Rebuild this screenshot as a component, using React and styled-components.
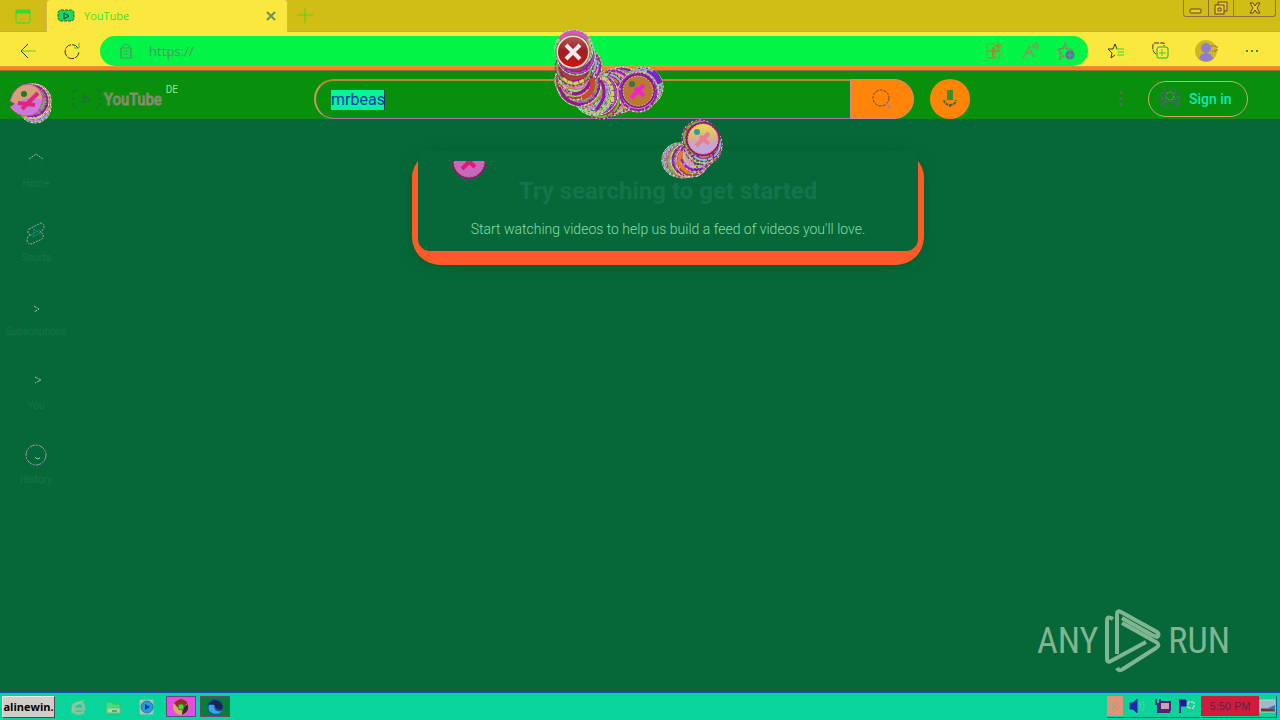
import React from "react";
import styled, { createGlobalStyle } from "styled-components";

const Global = createGlobalStyle`
  * { box-sizing: border-box; }
  body { margin: 0; background: #066839; font-family: Roboto, "Liberation Sans", sans-serif; }
  button, input { font: inherit; border: 0; padding: 0; margin: 0; background: none; color: inherit; }
  a { color: inherit; text-decoration: none; }
`;

const Page = styled.div`
  position: relative;
  min-height: 100vh;
  display: flex;
  flex-direction: column;
  overflow: hidden;
`;

const Glyph = styled.svg`
  display: block;
  flex: none;
  width: ${(p) => p.$w || 16}px;
  height: ${(p) => p.$h || p.$w || 16}px;
  fill: none;
  stroke: ${(p) => p.$c || "#3a3050"};
  overflow: visible;
`;

const TabStrip = styled.div`
  display: flex;
  height: 32px;
  background: #d0be17;
  border-bottom: 1px solid #c8b024;
`;

const TabActions = styled.button`
  width: 46px;
  display: grid;
  place-items: center;
`;

const Tab = styled.div`
  width: 242px;
  height: 32px;
  padding: 0 10px 0 11px;
  display: flex;
  align-items: center;
  gap: 10px;
  background: #fae83f;
  border: 1px solid #d8b458;
  border-width: 0 1px;
  border-radius: 4px 4px 0 0;
  color: #35e52c;
  font: 11px/16px "Open Sans", "Noto Sans", sans-serif;
`;

const TabTitle = styled.span`
  flex: 1;
`;

const NewTab = styled.button`
  width: 34px;
  display: grid;
  place-items: center;
`;

const WindowButtons = styled.div`
  display: flex;
  height: 17px;
  margin: 0 4px 0 auto;
  border: 1px solid #8f7042;
  border-top: 0;
  border-radius: 0 0 3px 3px;
`;

const WindowButton = styled.button`
  width: ${(p) => p.$w}px;
  display: grid;
  place-items: center;
  & + & { border-left: 1px solid #8f7042; }
`;

const Toolbar = styled.div`
  display: flex;
  align-items: center;
  height: 34px;
  padding: 4px 6px 0;
  background: #fae83f;
`;

const ToolButton = styled.button`
  width: ${(p) => p.$w || 44}px;
  height: 30px;
  display: grid;
  place-items: center;
`;

const AddressBar = styled.div`
  flex: 1;
  display: flex;
  align-items: center;
  height: 30px;
  margin: 0 6px;
  padding: 0 4px 0 18px;
  border-radius: 15px;
  background: #02f446;
`;

const AddressInput = styled.input`
  flex: 1;
  min-width: 0;
  margin-left: 15px;
  outline: none;
  color: #4e9a5c;
  font: 13px/20px "Noto Sans", sans-serif;
`;

const LoadingStrip = styled.div`
  height: 5px;
  background: #ff8408;
  border-top: 1px solid #f09048;
  border-bottom: 1px solid #8d7048;
`;

const Masthead = styled.header`
  position: relative;
  z-index: 1;
  display: grid;
  grid-template-columns: 1fr 656px 1fr;
  align-items: center;
  height: 48px;
  padding: 8px 0 0 4px;
  background: #088f0c;
`;

const MastheadStart = styled.div`
  display: flex;
  align-items: center;
  padding-left: 4px;
`;

const MenuButton = styled.button`
  width: 44px;
  height: 40px;
`;

const Brand = styled.a`
  display: flex;
  align-items: center;
  margin-left: 20px;
`;

const BrandName = styled.span`
  margin-left: 3px;
  color: #3d9c48;
  font: 400 17px/24px "Liberation Sans Narrow", "Roboto Condensed", Roboto, sans-serif;
  -webkit-text-stroke: 1px #8a8c70;
`;

const Country = styled.sup`
  align-self: flex-start;
  margin: -3px 0 0 4px;
  color: #9fe29a;
  font: 10px/12px Roboto, sans-serif;
`;

const MastheadCenter = styled.div`
  display: flex;
  gap: 16px;
`;

const SearchForm = styled.form`
  flex: 1;
  display: flex;
  height: 40px;
`;

const SearchField = styled.label`
  flex: 1;
  display: flex;
  align-items: center;
  padding-left: 15px;
  border: 2px solid #b88a30;
  border-left-color: #cf9660;
  border-bottom: 1px solid #a678a0;
  border-right: 0;
  border-radius: 20px 0 0 20px;
`;

const Query = styled.input`
  width: 54px;
  height: 20px;
  outline: none;
  background: #04f4a0;
  border-right: 1px solid #063a60;
  color: #0b3aa4;
  font: 16px/19px Roboto, sans-serif;
`;

const SearchButton = styled.button`
  width: 64px;
  display: grid;
  place-items: center;
  background: #ff8408;
  border: 1px solid #d58a90;
  border-radius: 0 20px 20px 0;
`;

const VoiceButton = styled.button`
  width: 40px;
  height: 40px;
  display: grid;
  place-items: center;
  border-radius: 50%;
  background: #ff8408;
`;

const MastheadEnd = styled.div`
  display: flex;
  align-items: center;
  justify-content: flex-end;
  gap: 24px;
  padding-right: 32px;
`;

const SignIn = styled.a`
  display: flex;
  align-items: center;
  gap: 8px;
  width: 100px;
  height: 36px;
  padding-left: 10px;
  border: 1px solid #d0a870;
  border-radius: 18px;
  color: #14e8b4;
  white-space: nowrap;
  font: 500 14px/18px Roboto, sans-serif;
`;

const Body = styled.div`
  flex: 1;
  display: flex;
  background: #066839;
`;

const Sidebar = styled.nav`
  width: 72px;
  padding-top: 12px;
`;

const SideLink = styled.a`
  display: flex;
  flex-direction: column;
  align-items: center;
  gap: 6px;
  height: 74px;
  padding-top: 16px;
  color: #187346;
  font: 10px/14px Roboto, sans-serif;
`;

const Feed = styled.main`
  flex: 1;
  display: flex;
  flex-direction: column;
  align-items: center;
  justify-content: space-between;
  padding: 31px 16px 18px 0;
`;

const PromptFrame = styled.section`
  width: 512px;
  max-width: 100%;
  padding: 0 6px 14px;
  border-radius: 28px;
  background: #ff5a28;
  box-shadow: 0 1px 12px #075a2c;
`;

const Prompt = styled.div`
  padding: 25px 0 11px;
  border-radius: 10px 10px 12px 12px;
  background: #066839;
  text-align: center;
`;

const PromptTitle = styled.h1`
  margin: 0 0 12px;
  color: #14734a;
  font: 700 24px/32px Roboto, sans-serif;
`;

const PromptText = styled.p`
  margin: 0;
  color: #84dfa8;
  font: 300 14px/21px Roboto, sans-serif;
`;

const Watermark = styled.div`
  align-self: flex-end;
  display: flex;
  align-items: center;
  gap: 7px;
  margin-right: 34px;
  color: #7fb591;
  font: 36px/64px "Liberation Sans Narrow", "Roboto Condensed", Roboto, sans-serif;
`;

const Taskbar = styled.footer`
  display: flex;
  align-items: center;
  height: 29px;
  padding: 0 3px 0 2px;
  border-top: 2px solid #0b52b8;
  background: #08d49c;
`;

const StartButton = styled.button`
  width: 53px;
  height: 22px;
  border: 1px solid;
  border-color: #f4e8e8 #504858 #504858 #f4e8e8;
  background: #d3cdc9;
  color: #000;
  white-space: nowrap;
  font: 700 11px/18px "Open Sans", sans-serif;
`;

const Launcher = styled.div`
  display: flex;
  gap: 4px;
  padding-left: 9px;
  margin-right: auto;
`;

const TaskButton = styled.button`
  width: 30px;
  height: 21px;
  display: grid;
  place-items: center;
  background: ${(p) => p.$bg || "transparent"};
  border: 1px solid ${(p) => (p.$bg ? "#684878" : "transparent")};
`;

const Tray = styled.div`
  display: flex;
  align-items: center;
  height: 22px;
  border: 1px solid #2850a8;
  border-width: 0 1px 1px 0;
`;

const TrayButton = styled.button`
  width: ${(p) => p.$w || 24}px;
  height: 20px;
  display: grid;
  place-items: center;
  background: ${(p) => p.$bg || "transparent"};
`;

const Clock = styled.time`
  width: 58px;
  height: 20px;
  margin-left: 2px;
  background: #d01c3c;
  color: #5c2444;
  text-align: center;
  font: 11px/20px "Liberation Sans", sans-serif;
`;

const TrailLayer = styled.svg`
  position: absolute;
  z-index: 2;
  top: 0;
  left: 0;
  width: 740px;
  height: 190px;
  pointer-events: none;
`;

const hues = ["#b04fa8", "#86e88c", "#8c1c94", "#cfc65c", "#79c6d0", "#a8402c", "#d48ad0", "#6abf3c", "#8a20b0", "#c87858"];

function Disc({ x, y, r = 18, n = 0 }) {
  const h = (k) => hues[(n + k) % hues.length];
  return (
    <g fill="none">
      <circle cx={x} cy={y} r={r} fill={h(0)} stroke={h(3)} />
      <circle cx={x} cy={y} r={r} stroke="#e8f0c8" strokeDasharray="1 2 2 3" />
      <circle cx={x} cy={y} r={r - 1} stroke="#3c2c5c" strokeDasharray="1 3 2 2" />
      <circle cx={x} cy={y} r={r - 2} stroke={h(2)} strokeWidth="2" strokeDasharray="14 2 5 1" />
      <circle cx={x} cy={y} r={r - 3} stroke={h(4)} strokeDasharray="2 1 1 3" />
      <circle cx={x} cy={y} r={r - 5} stroke={h(7)} strokeWidth="2" strokeDasharray="9 3 2 1" />
      <circle cx={x} cy={y} r={r - 7} stroke={h(5)} strokeDasharray="1 2" />
    </g>
  );
}

function Face({ x, y, fill, mark, eye = "#397440", ring = "#f0b070" }) {
  return (
    <g fill="none">
      <circle cx={x} cy={y} r="16" fill={fill} stroke="#8b187a" strokeWidth="2" />
      <circle cx={x} cy={y} r="15" stroke={ring} strokeWidth="1" strokeDasharray="2 1" />
      <path d={`M${x - 7} ${y + 7}L${x + 6} ${y - 6}M${x - 3} ${y - 3}L${x + 6} ${y + 5}`} stroke={mark} strokeWidth="4" />
      <circle cx={x - 6} cy={y - 7} r="3" fill={eye} />
    </g>
  );
}

const firstTrail = [
  [622, 88, 21], [619, 93, 20], [613, 89, 20], [610, 95, 21], [606, 92, 20], [601, 99, 20],
  [597, 94, 21], [593, 96, 19], [589, 89, 21], [584, 86, 21], [579, 84, 22], [575, 80, 20],
  [583, 66, 19], [576, 73, 20], [578, 62, 20], [574, 67, 19], [576, 56, 19], [574, 49, 19],
];
const secondTrail = [[679, 160, 17], [683, 161, 17], [688, 160, 17], [692, 161, 16], [696, 155, 17], [703, 146, 19], [704, 144, 18], [700, 138, 18]];

function CursorTrails() {
  return (
    <TrailLayer viewBox="0 0 740 190" aria-hidden="true">
      <defs>
        <linearGradient id="close" x2="0" y2="1">
          <stop offset="0" stopColor="#b8585c" />
          <stop offset=".45" stopColor="#9c2024" />
          <stop offset="1" stopColor="#cf140c" />
        </linearGradient>
        <linearGradient id="orb" x2="0" y2="1">
          <stop offset="0" stopColor="#ece040" />
          <stop offset=".5" stopColor="#d9ae90" />
          <stop offset=".7" stopColor="#c7a4dc" />
        </linearGradient>
        <clipPath id="lower"><path d="M440 161h60v25h-60z" /></clipPath>
      </defs>
      {firstTrail.map(([x, y, r], i) => <Disc key={i} x={x} y={y} r={r} n={i * 3} />)}
      <path d="M559 87q6 16 22 18M572 94q16 0 20-18M600 80q10 14-4 30" fill="none" stroke="#8a1c98" strokeWidth="3" />
      <path d="M563 78q10 10 22 1M602 78q14 4 10 26" fill="none" stroke="#d5cf5c" strokeWidth="3" strokeDasharray="5 1" />
      <path d="M592 78q4 14-10 20" fill="none" stroke="#c84830" strokeWidth="5" />
      <Disc x={643} y={87} r={20} n={4} />
      <Disc x={638} y={92} r={20} n={6} />
      <path d="M647 71q9 4 12 13M653 71q6 5 8 12" fill="none" stroke="#7625c8" strokeWidth="3" />
      <Face x={638} y={91} fill="#b9792e" mark="#f122d2" ring="#c9d094" />
      <path d="M560 40q14-13 27 0" fill="none" stroke="#dc54b8" strokeWidth="6" />
      <circle cx="573" cy="52" r="16" fill="url(#close)" stroke="#e9dcd2" strokeWidth="2" />
      <circle cx="573" cy="52" r="17" fill="none" stroke="#806c58" />
      <path d="M566 45l14 14m0-14l-14 14" stroke="#f0ecee" strokeWidth="4" />
      {secondTrail.map(([x, y, r], i) => <Disc key={i} x={x} y={y} r={r} n={i * 3 + 4} />)}
      <path d="M682 151l-4 12 10 10" stroke="#f07818" strokeWidth="3" fill="none" />
      <path d="M697 160v13M694 164h7M694 169h7" stroke="#102848" strokeDasharray="2 1" fill="none" />
      <Face x={703} y={139} fill="url(#orb)" mark="#e58090" eye="#3797a0" />
      <g clipPath="url(#lower)">
        <Face x={469} y={162} fill="#c967ba" mark="#d81b75" ring="#c68a88" />
      </g>
    </TrailLayer>
  );
}

function MenuOrb() {
  return (
    <Glyph $w={44} viewBox="0 0 44 44">
      <Disc x={27} y={28} r={16} n={4} />
      <Disc x={26} y={22} r={17} n={3} />
      <Disc x={24} y={22} r={17} n={0} />
      <path d="M2 22Q7 5 21 5q12 2 14 15-3 16-16 17Q9 37 2 28l5-3z" fill="#d6a079" stroke="#db40bd" />
      <path d="M4 27q16-12 30-6-2 13-12 15Q8 37 4 27z" fill="#c77bdc" stroke="none" />
      <path d="M10 24l17 2M14 30L30 14" stroke="#de287e" strokeWidth="4" />
      <circle cx="16" cy="15" r="3" fill="#287426" stroke="none" />
    </Glyph>
  );
}

const sideItems = [
  ["Home", <g key="h"><path d="M5 12l7-5 7 5" stroke="#92b899" strokeDasharray="2 1" /><path d="M6 12v8M18 12v8" stroke="#0b6d3b" /></g>],
  ["Shorts", <g key="s" strokeDasharray="2 1"><path d="M5 8l12-6q3 0 3 4-1 4-4 5l3 2q1 5-3 6l-9 4q-4 0-4-4 0-4 4-5-3-1-3-3 0-2 1-3z" stroke="#a2a4a6" /><path d="M10 8l6 4-7 4zM7 14l9-5" stroke="#238c80" /></g>],
  ["Subscriptions", <path key="u" d="M10 11l5 3-5 3" stroke="#98c59e" strokeDasharray="3 1" />],
  ["You", <path key="y" d="M11 8l6 3-6 3" stroke="#98c59e" strokeDasharray="3 1" />],
  ["History", <g key="i"><circle cx="12" cy="12" r="10" stroke="#a094a8" strokeDasharray="6 1 2 1" /><path d="M11 14l2 2 3-1" stroke="#9ac8a4" /></g>],
];

export default function App() {
  return (
    <>
      <Global />
      <Page>
        <TabStrip>
          <TabActions aria-label="Tab actions">
            <Glyph viewBox="0 0 16 16" $c="#2fdc35">
              <path d="M1 2h14v3H1z" fill="#2fdc35" /><path d="M1 5v9q0 1 2 1h10q2 0 2-2V5" /><path d="M5 12q3-2 5-1" stroke="#b0bc24" />
            </Glyph>
          </TabActions>
          <Tab>
            <Glyph $w={16} $h={12} viewBox="0 0 16 12">
              <rect width="16" height="11" rx="3" fill="#18d864" stroke="#485b30" strokeDasharray="3 1" /><path d="M6 3l5 3-5 3z" stroke="#084048" />
            </Glyph>
            <TabTitle>YouTube</TabTitle>
            <button aria-label="Close tab"><Glyph $w={12} viewBox="0 0 12 12" $c="#6b8f60"><path d="M2 2l8 8m0-8l-8 8" strokeWidth="2" /></Glyph></button>
          </Tab>
          <NewTab aria-label="New tab"><Glyph viewBox="0 0 16 16" $c="#52d321"><path d="M8 0v15M0 7h16" /></Glyph></NewTab>
          <WindowButtons>
            <WindowButton $w={24} aria-label="Minimize"><Glyph $w={14} viewBox="0 0 14 14" $c="#674529"><rect x="1" y="8" width="11" height="4" rx="1" fill="#e9cb32" /></Glyph></WindowButton>
            <WindowButton $w={25} aria-label="Restore"><Glyph $w={14} viewBox="0 0 14 14" $c="#674529"><path d="M4 4V1h9v9h-3" fill="#e9cb32" /><rect x="1" y="4" width="9" height="9" fill="#e9cb32" /><path d="M4 7h3v3H4z" /></Glyph></WindowButton>
            <WindowButton $w={42} aria-label="Close window"><Glyph $w={12} viewBox="0 0 12 12" $c="#674529"><path d="M1 1h3l2 3 2-3h3L8 6l3 5H8L6 8l-2 3H1l3-5z" fill="#e9cb32" /></Glyph></WindowButton>
          </WindowButtons>
        </TabStrip>

        <Toolbar>
          <ToolButton aria-label="Back"><Glyph viewBox="0 0 16 16"><path d="M1 8h15" stroke="#47d928" /><path d="M8 1L1 8l7 7" /></Glyph></ToolButton>
          <ToolButton aria-label="Reload"><Glyph viewBox="0 0 16 16"><path d="M14 5a7 7 0 1 0 1 4" strokeDasharray="7 1" /><path d="M10 5h5V0" stroke="#35c52c" /></Glyph></ToolButton>
          <AddressBar>
            <Glyph viewBox="0 0 16 16" $c="#46a35c"><path d="M3 5h10v10H3zM4 5q0-4 4-4t4 4M5 8h6M5 11h6" /><path d="M3 5v10M13 5v10" stroke="#737a58" strokeDasharray="2 1" /></Glyph>
            <AddressInput aria-label="Address" defaultValue="https://" />
            <ToolButton $w={36} aria-label="Apps"><Glyph viewBox="0 0 16 16" $c="#a38c38"><path d="M1 1h8v14H1zM1 8h13v7H1" strokeDasharray="3 1" /><path d="M7 4v10M3 8h11M12 0v6M9 3h6" strokeWidth="2" /></Glyph></ToolButton>
            <ToolButton $w={36} aria-label="Read aloud"><Glyph viewBox="0 0 16 16" $c="#8f9460"><path d="M1 15L7 4l5 11M4 10h6M10 2q3 1 2 4M13 0q4 2 2 7" strokeDasharray="4 1" strokeWidth="2" /></Glyph></ToolButton>
            <ToolButton $w={36} aria-label="Add favorite"><Glyph viewBox="0 0 16 16" $c="#809064"><path d="M7 1l2 5 6 1-4 4 1 4-5-3-5 3 1-5-3-4h5z" strokeDasharray="3 1" strokeWidth="2" /><circle cx="12" cy="12" r="4" fill="#7064a8" stroke="#7064a8" /><path d="M9 12h6M12 9v6" stroke="#22c860" /></Glyph></ToolButton>
          </AddressBar>
          <ToolButton aria-label="Favorites"><Glyph viewBox="0 0 16 16"><path d="M7 1l2 5M7 1L5 6H0l4 4-1 5 4-3" /><path d="M8 6h8M10 9h6M9 12h7" stroke="#2cda30" /></Glyph></ToolButton>
          <ToolButton aria-label="Collections"><Glyph viewBox="0 0 16 16"><path d="M4 11Q0 9 1 2q0-2 2-2h9v3" strokeDasharray="5 1" /><rect x="5" y="4" width="11" height="11" rx="2" stroke="#28a52c" /><path d="M10 6v7M7 10h7" stroke="#28dc30" /></Glyph></ToolButton>
          <ToolButton $w={48} aria-label="Profile"><Glyph $w={22} viewBox="0 0 22 22"><circle cx="11" cy="11" r="11" fill="#cfb827" stroke="none" /><circle cx="11" cy="8" r="5" fill="#917cd0" stroke="none" /><path d="M4 19q1-6 7-6t7 6q-7 5-14 0z" fill="#917cd0" stroke="none" /><path d="M16 6h6v5h-5" stroke="#9c5840" strokeDasharray="2 1" /></Glyph></ToolButton>
          <ToolButton aria-label="Settings"><Glyph viewBox="0 0 16 16"><path d="M2 8h2M7 8h2M12 8h2" stroke="#438828" strokeWidth="2" /></Glyph></ToolButton>
        </Toolbar>
        <LoadingStrip />

        <Masthead>
          <MastheadStart>
            <MenuButton aria-label="Menu"><MenuOrb /></MenuButton>
            <Brand href="#home">
              <Glyph $w={29} $h={20} viewBox="0 0 29 20" $c="#245f55"><path d="M6 1H4Q1 1 1 5M1 14q0 5 4 5M23 1h2q3 0 3 4M28 14q0 5-4 5" strokeDasharray="3 1" /><path d="M1 8v4M28 8v4M11 6l7 4-7 4zM14 8v4" strokeDasharray="3 1" /></Glyph>
              <BrandName>YouTube</BrandName>
              <Country>DE</Country>
            </Brand>
          </MastheadStart>
          <MastheadCenter>
            <SearchForm onSubmit={(e) => e.preventDefault()}>
              <SearchField><Query aria-label="Search" defaultValue="mrbeas" /></SearchField>
              <SearchButton aria-label="Submit search"><Glyph $w={20} viewBox="0 0 20 20" $c="#68503c"><circle cx="9" cy="9" r="8" strokeDasharray="3 1" /><path d="M14 14l5 5" stroke="#b276a0" strokeWidth="2" strokeDasharray="2 1" /></Glyph></SearchButton>
            </SearchForm>
            <VoiceButton aria-label="Search with your voice"><Glyph $w={20} viewBox="0 0 20 20" $c="#56633b"><path d="M10 1v10" stroke="#34902a" strokeWidth="6" /><path d="M4 11q1 5 6 5t6-5M10 15v4" strokeDasharray="3 1" strokeWidth="2" /></Glyph></VoiceButton>
          </MastheadCenter>
          <MastheadEnd>
            <button aria-label="More"><Glyph $w={6} $h={18} viewBox="0 0 6 18" $c="#507050"><path d="M3 1v3M3 7v3M3 13v3" strokeWidth="3" /></Glyph></button>
            <SignIn href="#signin">
              <Glyph $w={22} viewBox="0 0 22 22" $c="#5e5698"><circle cx="11" cy="11" r="10" strokeDasharray="3 1" /><circle cx="11" cy="8" r="4" stroke="#75a878" strokeDasharray="2 1" /><path d="M3 17q8-8 16 0M5 3l3 5M17 3l-3 5M2 11h6M14 11h6" strokeWidth="2" strokeDasharray="3 1" /></Glyph>
              Sign in
            </SignIn>
          </MastheadEnd>
        </Masthead>

        <Body>
          <Sidebar>
            {sideItems.map(([label, icon]) => (
              <SideLink key={label} href={`#${label}`}><Glyph $w={24} viewBox="0 0 24 24">{icon}</Glyph>{label}</SideLink>
            ))}
          </Sidebar>
          <Feed>
            <PromptFrame>
              <Prompt>
                <PromptTitle>Try searching to get started</PromptTitle>
                <PromptText>Start watching videos to help us build a feed of videos you'll love.</PromptText>
              </Prompt>
            </PromptFrame>
            <Watermark>
              <span>ANY</span>
              <Glyph $w={56} $h={64} viewBox="0 0 56 64" $c="#7fb591">
                <path d="M8 10Q2 6 2 12v38q0 4 4 2L41 33M12 45V5q0-4 4-2l36 20q3 3 0 5l-5-2-30-17M12 59q2 4 6 1l33-21q5-3 0-6L17 14" strokeWidth="4" strokeLinejoin="round" />
              </Glyph>
              <span>RUN</span>
            </Watermark>
          </Feed>
        </Body>

        <Taskbar>
          <StartButton>alinewin.</StartButton>
          <Launcher>
            <TaskButton aria-label="Internet Explorer"><Glyph viewBox="0 0 16 16" $c="#8ac3a2"><path d="M3 10h10q0-7-6-6t-5 6q2 7 11 3" strokeWidth="3" /><path d="M1 14Q-1 8 13 1" stroke="#c0c96c" /></Glyph></TaskButton>
            <TaskButton aria-label="Explorer"><Glyph viewBox="0 0 16 16" $c="#20c85a"><path d="M1 3h6l2 2h6v10H1z" fill="#45df79" /><path d="M2 9h13v5H2z" fill="#9ae0a3" stroke="#72b88c" /><path d="M7 12h5" stroke="#27664c" /></Glyph></TaskButton>
            <TaskButton aria-label="Media player"><Glyph viewBox="0 0 16 16"><path d="M1 1h13v14H1z" fill="#b0c9bf" stroke="#a8b8b0" /><circle cx="8" cy="8" r="6" fill="#279bd5" stroke="#2876ad" /><path d="M6 5l5 3-5 3z" fill="#063fb3" stroke="none" /></Glyph></TaskButton>
            <TaskButton $bg="#e64be9" aria-label="Chrome"><Glyph viewBox="0 0 16 16"><circle cx="8" cy="8" r="8" fill="#dcad57" stroke="none" /><path d="M1 4q7-8 14 0l-5 4H4z" fill="#9a2b28" stroke="none" /><path d="M15 5q2 8-6 11l1-8z" fill="#43204b" stroke="none" /><circle cx="8" cy="8" r="3" fill="#43df27" stroke="#53763d" /></Glyph></TaskButton>
            <TaskButton $bg="#087d35" aria-label="Edge"><Glyph viewBox="0 0 16 16"><circle cx="8" cy="8" r="8" fill="#184ca9" stroke="none" /><path d="M1 6Q7-3 14 4q4 5-1 7-5-1-5-5Q4 4 1 6z" fill="#21214f" stroke="none" /><path d="M2 6q-2 8 6 9 5 0 7-3-8 2-8-6z" fill="#35a9dc" stroke="none" /></Glyph></TaskButton>
          </Launcher>
          <Tray>
            <TrayButton $w={16} $bg="#e39375" aria-label="Show hidden icons"><Glyph $w={10} viewBox="0 0 10 10" $c="#66bb98"><path d="M2 4l3-3 3 3M2 8l3-3 3 3" /></Glyph></TrayButton>
            <TrayButton $w={28} aria-label="Volume"><Glyph viewBox="0 0 16 16" $c="#1a28b0"><path d="M1 5h3l4-4v14l-4-4H1z" fill="#1a28b0" /><path d="M10 5q3 3 0 6M13 3q4 5 0 10" stroke="#94cba0" strokeDasharray="2 1" /></Glyph></TrayButton>
            <TrayButton aria-label="Network"><Glyph viewBox="0 0 16 16" $c="#571f79"><path d="M5 4h10v8H5zM1 1v5h4V1M3 6v8h12" strokeWidth="2" /><path d="M6 5h8v6H6z" fill="#bfa9b0" stroke="none" /></Glyph></TrayButton>
            <TrayButton aria-label="Action center"><Glyph viewBox="0 0 16 16" $c="#211a9a"><path d="M1 1v14" strokeWidth="2" /><path d="M2 2h5v6H2z" fill="#211a9a" /><path d="M9 4h6v6H9z" stroke="#a5cba8" strokeDasharray="2 1" strokeWidth="2" /></Glyph></TrayButton>
            <Clock>5:50 PM</Clock>
            <TrayButton $w={17} aria-label="Show desktop"><Glyph $w={17} $h={14} viewBox="0 0 17 14"><path d="M1 1h15v12H1z" fill="#9eb9cc" stroke="#b0dcbc" /><path d="M2 11h14" stroke="#743830" strokeWidth="3" /><path d="M9 9l7-3v5z" fill="#3973bc" stroke="none" /></Glyph></TrayButton>
          </Tray>
        </Taskbar>
        <CursorTrails />
      </Page>
    </>
  );
}
